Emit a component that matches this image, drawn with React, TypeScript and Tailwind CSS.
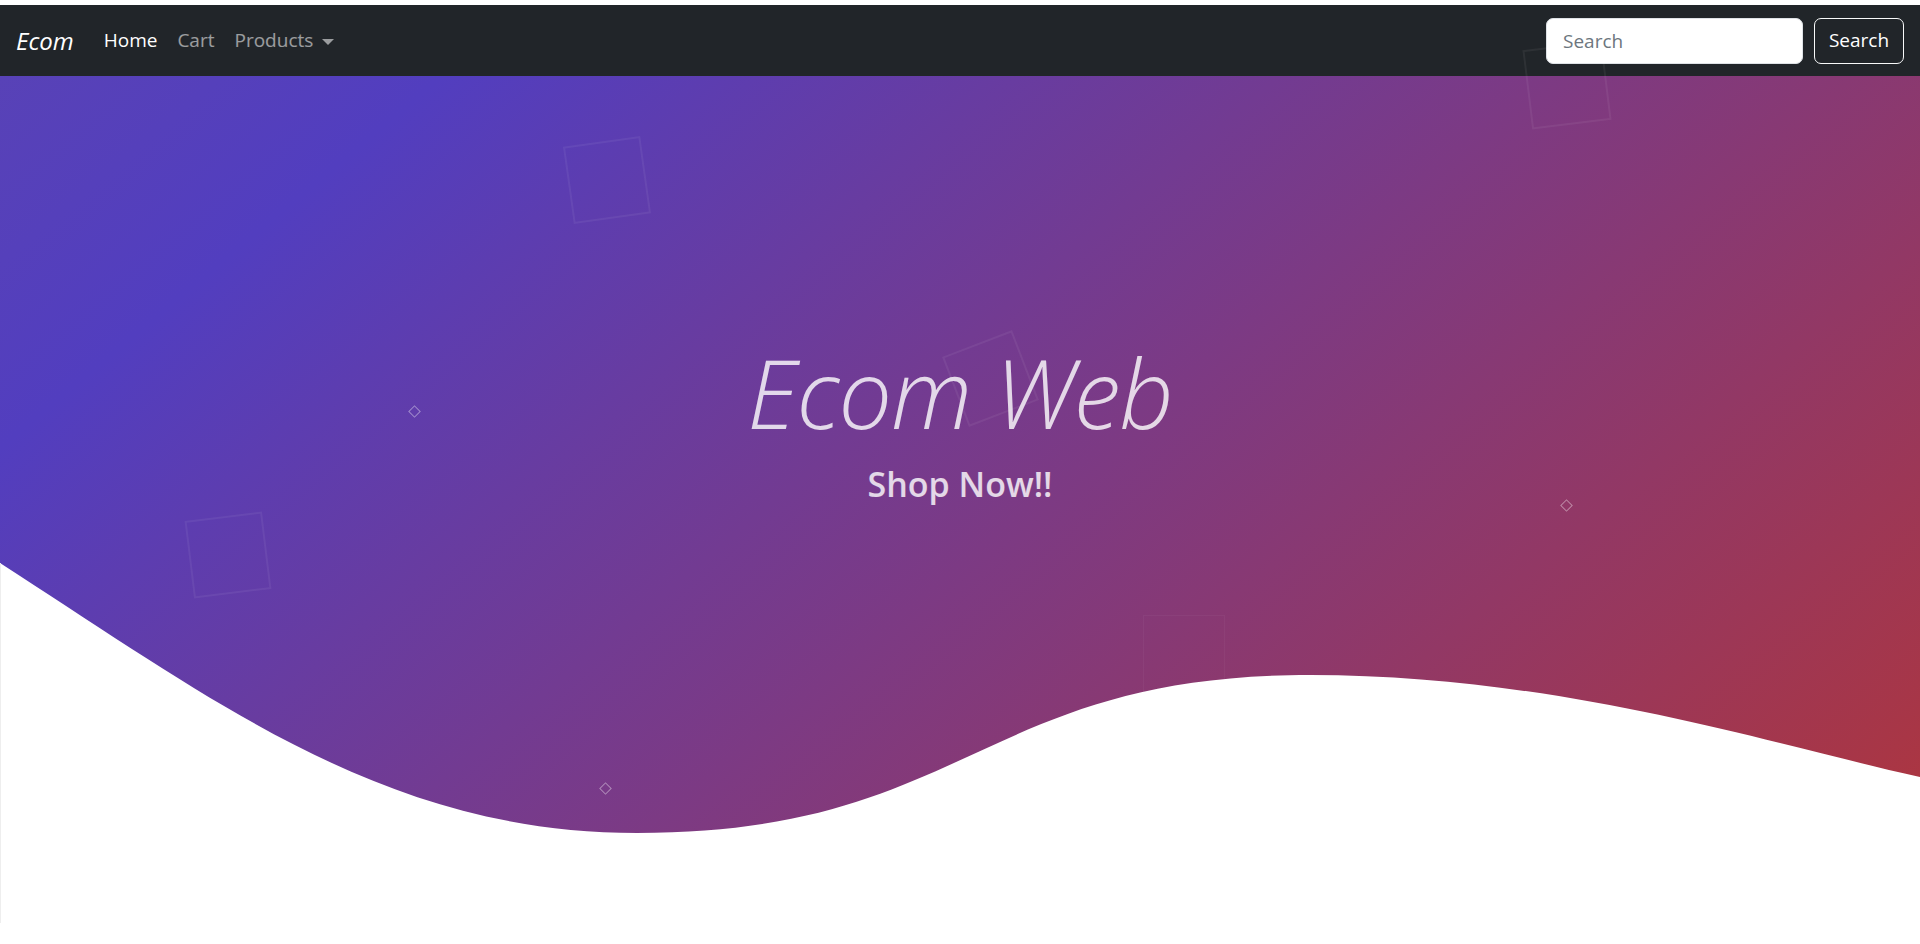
import React from "react";

const squares = [
  { left: 568, top: 141, size: 78, rot: "rotate-[-8deg]" },
  { left: 189, top: 516, size: 78, rot: "rotate-[-7deg]" },
  { left: 953, top: 341, size: 75, rot: "rotate-[-21deg]" },
  { left: 1527, top: 45, size: 80, rot: "rotate-[-7deg]" },
];

const diamonds = [
  { left: 410, top: 407 },
  { left: 1562, top: 501 },
  { left: 601, top: 784 },
];

function Navbar() {
  return (
    <nav className="flex h-[71px] items-center justify-between bg-[#212529] px-4">
      <div className="flex items-center">
        <a href="#" className="mr-5 text-[24px] italic text-white">
          Ecom
        </a>
        <ul className="flex items-center text-[19px]">
          <li>
            <a href="#" className="px-[10px] text-white">
              Home
            </a>
          </li>
          <li>
            <a href="#" className="px-[10px] text-white/55">
              Cart
            </a>
          </li>
          <li>
            <a href="#" className="flex items-center px-[10px] text-white/55">
              Products
              <span className="ml-[9px] mt-[2px] h-0 w-0 border-x-[6px] border-t-[6px] border-x-transparent border-t-current" />
            </a>
          </li>
        </ul>
      </div>
      <form className="flex items-center gap-[11px]" onSubmit={(e) => e.preventDefault()}>
        <input
          type="search"
          placeholder="Search"
          className="h-[46px] w-[257px] rounded-[7px] border border-[#dee2e6] bg-white px-4 text-[19px] text-[#212529] placeholder:text-[#6c757d] outline-none"
        />
        <button
          type="submit"
          className="h-[46px] w-[90px] rounded-[7px] border border-[#f8f9fa] text-[19px] text-white"
        >
          Search
        </button>
      </form>
    </nav>
  );
}

function Hero() {
  return (
    <section className="relative h-[868px] overflow-hidden bg-[linear-gradient(140deg,#5842b7_0%,#523ebf_15%,#b23538_100%)]">
      <div className="flex flex-col items-center pt-[256px] text-white/80">
        <h1 className="text-[95px] font-light italic leading-[120px] tracking-[-1px]">
          Ecom Web
        </h1>
        <h3 className="mt-[11px] text-[34px] font-semibold leading-[42px]">
          Shop Now!!
        </h3>
      </div>
      <svg
        className="absolute bottom-0 left-0 h-[381px] w-full"
        viewBox="0 0 1920 381"
        preserveAspectRatio="none"
      >
        <path
          d="M0,0 C220,142 387,270 637,270 C967,270 980,112 1310,112 C1560,112 1770,181 1920,214 L1920,381 L0,381 Z"
          fill="#ffffff"
        />
      </svg>
    </section>
  );
}

export default function App() {
  return (
    <div className="relative h-[944px] overflow-hidden bg-white pt-[5px] font-['Open_Sans',sans-serif]">
      <Navbar />
      <Hero />
      <div className="absolute left-0 top-[563px] h-[360px] w-px bg-[#eeeeee]" />
      {/* floating shapes */}
      <div className="pointer-events-none absolute inset-0">
        {squares.map((s, i) => (
          <div
            key={i}
            className={`absolute border-2 border-white/[0.06] ${s.rot}`}
            style={{ left: s.left, top: s.top, width: s.size, height: s.size }}
          />
        ))}
        <div className="absolute left-[1143px] top-[615px] h-[82px] w-[82px] border border-white/[0.04]" />
        {diamonds.map((d, i) => (
          <div
            key={i}
            className="absolute h-[9px] w-[9px] rotate-45 border border-white/40"
            style={{ left: d.left, top: d.top }}
          />
        ))}
      </div>
    </div>
  );
}
